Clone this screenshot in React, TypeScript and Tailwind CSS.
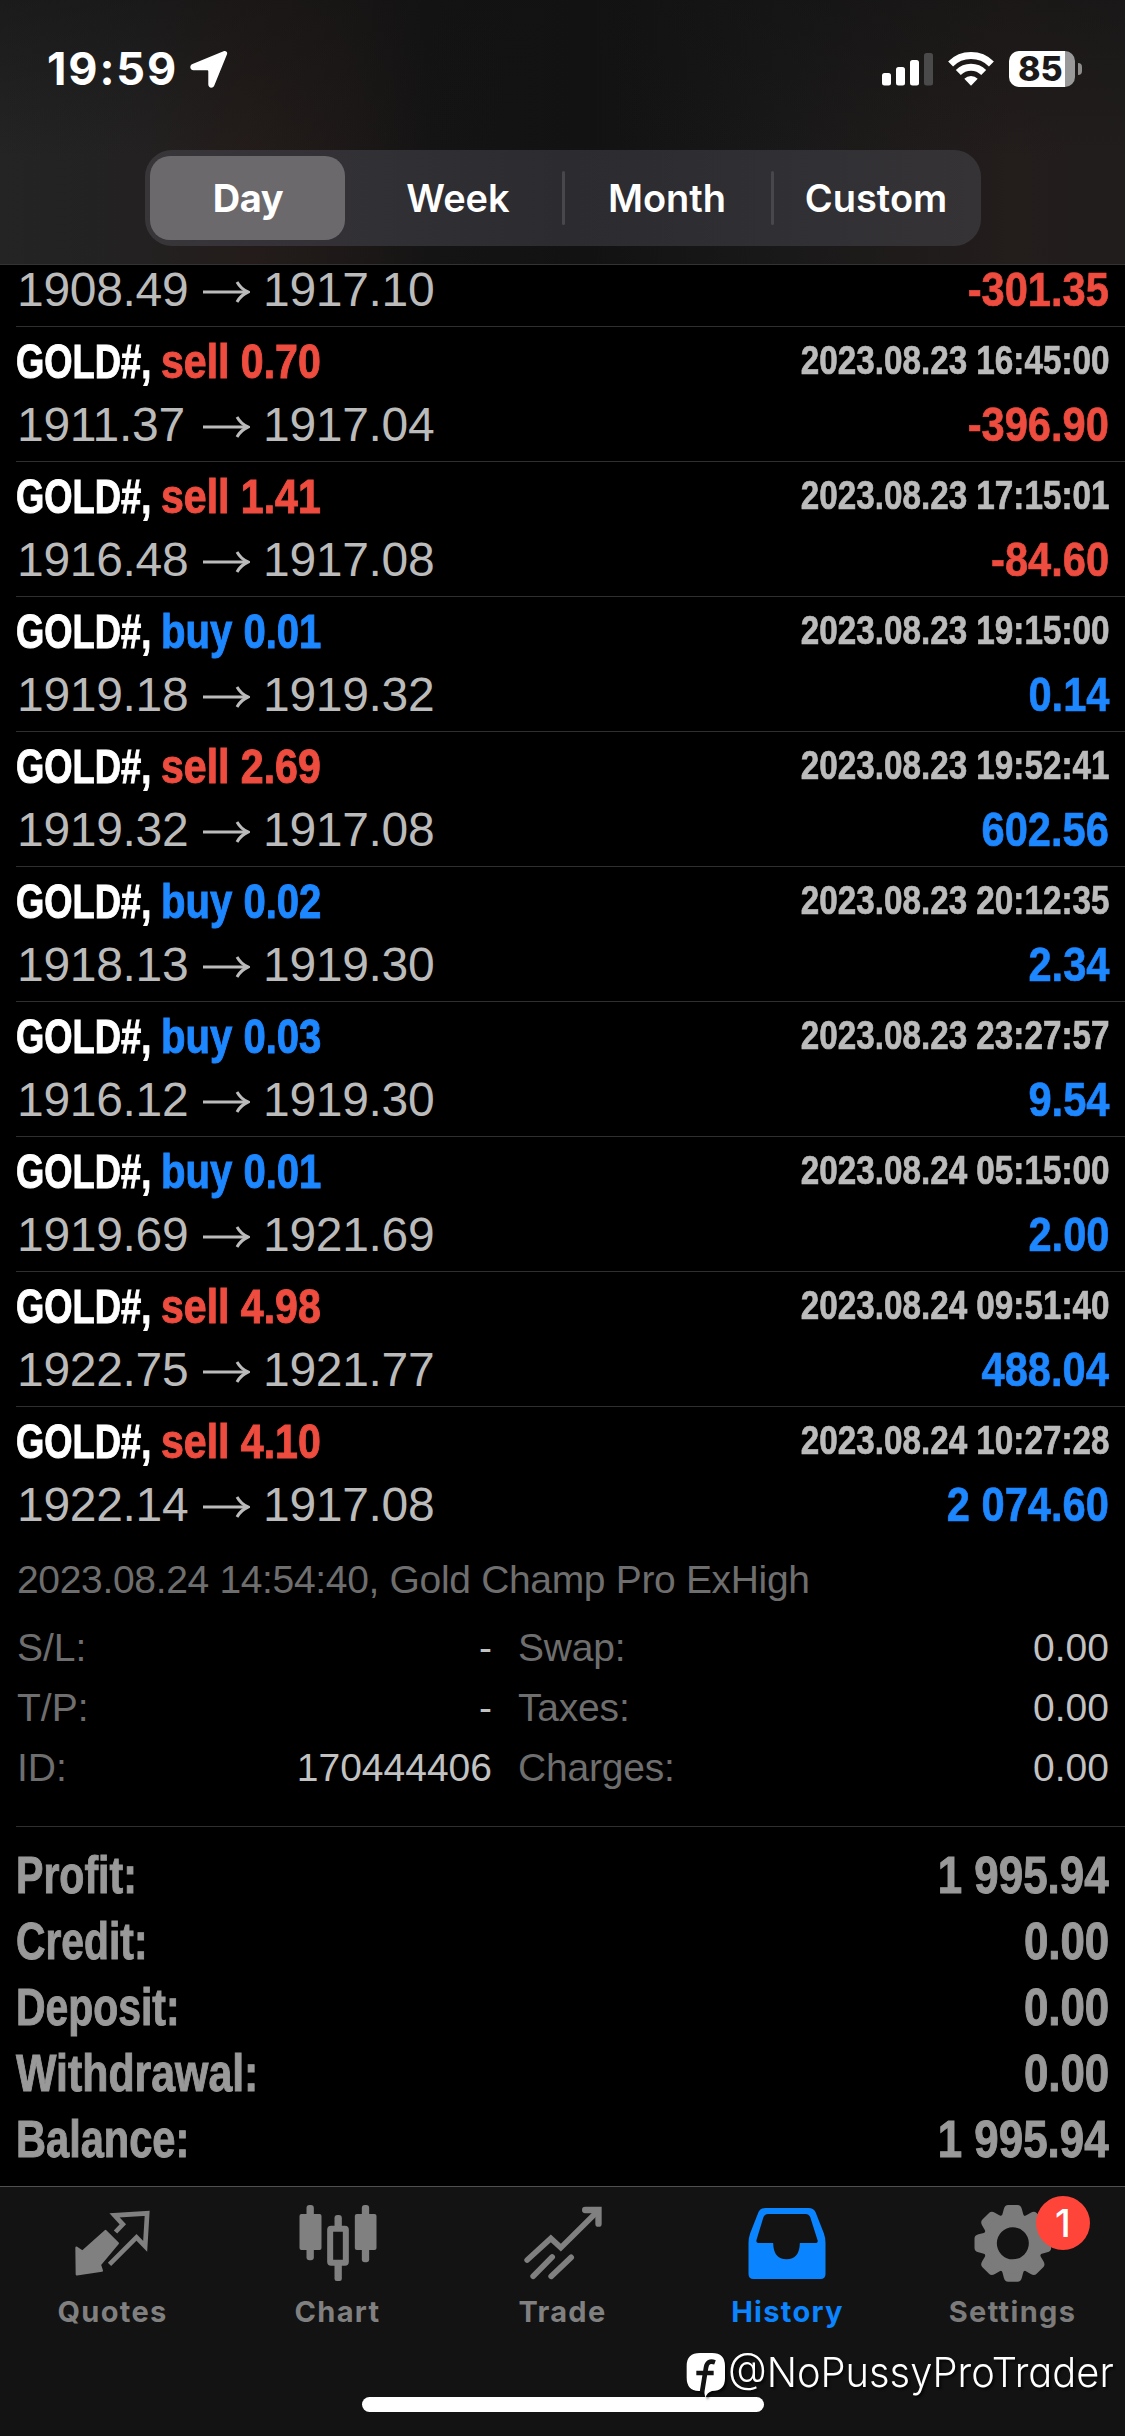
import type { ReactNode } from 'react';

type Deal = {
  side: 'sell' | 'buy';
  volume: string;
  open: string;
  close: string;
  time: string;
  profit: string;
};

const deals: Deal[] = [
  { side: 'sell', volume: '0.70', open: '1911.37', close: '1917.04', time: '2023.08.23 16:45:00', profit: '-396.90' },
  { side: 'sell', volume: '1.41', open: '1916.48', close: '1917.08', time: '2023.08.23 17:15:01', profit: '-84.60' },
  { side: 'buy', volume: '0.01', open: '1919.18', close: '1919.32', time: '2023.08.23 19:15:00', profit: '0.14' },
  { side: 'sell', volume: '2.69', open: '1919.32', close: '1917.08', time: '2023.08.23 19:52:41', profit: '602.56' },
  { side: 'buy', volume: '0.02', open: '1918.13', close: '1919.30', time: '2023.08.23 20:12:35', profit: '2.34' },
  { side: 'buy', volume: '0.03', open: '1916.12', close: '1919.30', time: '2023.08.23 23:27:57', profit: '9.54' },
  { side: 'buy', volume: '0.01', open: '1919.69', close: '1921.69', time: '2023.08.24 05:15:00', profit: '2.00' },
  { side: 'sell', volume: '4.98', open: '1922.75', close: '1921.77', time: '2023.08.24 09:51:40', profit: '488.04' },
  { side: 'sell', volume: '4.10', open: '1922.14', close: '1917.08', time: '2023.08.24 10:27:28', profit: '2 074.60' },
];

const details = [
  ['S/L:', '-', 'Swap:', '0.00'],
  ['T/P:', '-', 'Taxes:', '0.00'],
  ['ID:', '170444406', 'Charges:', '0.00'],
];

const totals = [
  { label: 'Profit:', value: '1 995.94', fit: 'scale-x-[0.805]' },
  { label: 'Credit:', value: '0.00', fit: 'scale-x-[0.8]' },
  { label: 'Deposit:', value: '0.00', fit: 'scale-x-[0.802]' },
  { label: 'Withdrawal:', value: '0.00', fit: 'scale-x-[0.84]' },
  { label: 'Balance:', value: '1 995.94', fit: 'scale-x-[0.815]' },
];

const periods = ['Day', 'Week', 'Month', 'Custom'];

function StatusBar() {
  return (
    <div className="flex h-[150px] items-start justify-between pt-[50px] pr-[43px] pl-[47px]">
      <div className="flex items-start">
        <span className="w-[143px] text-[45px] leading-[38px] font-bold tracking-[1.9px] text-white">19:59</span>
        <svg className="h-[38px] w-[38px]" viewBox="0 0 38 38" fill="#fff">
          <path d="M33.5 1.2c2.5-1.1 4.4.8 3.4 3.3L24.3 35.600c-1.400 3.300-6 2.700-6-1V21.500c0-.9-.4-1.300-1.300-1.300H3.500c-3.700 0-4.400-4.600-1-6.100z" />
        </svg>
      </div>
      <div className="flex items-start">
        <svg className="h-[38px] w-[52px]" viewBox="0 0 52 38" fill="#fff">
          <rect x="0" y="23" width="9" height="12.500" rx="2.500" />
          <rect x="14" y="17" width="9" height="18.500" rx="2.500" />
          <rect x="28" y="10" width="9" height="25.500" rx="2.500" />
          <rect x="42" y="3" width="9" height="32.500" rx="2.500" fill="#4b4a4b" />
        </svg>
        <svg className="ml-[14px] h-[38px] w-[46px]" viewBox="0 0 46 38" fill="none" stroke="#fff" strokeWidth="7">
          <path d="M2.600 13.900a29 29 0 0 1 40.800 0" />
          <path d="M10.300 22.500a18 18 0 0 1 25.400 0" />
          <path d="M23 35.700l-6.700-6.900a9.500 9.500 0 0 1 13.400 0z" fill="#fff" stroke="none" />
        </svg>
        <div className="mt-px ml-[15px] flex items-center">
          <div className="flex h-[36px] w-[66px] items-center rounded-[10px] bg-[linear-gradient(90deg,#fff_56px,#9a9999_56px)] pl-[9px] text-[34px] leading-[36px] font-extrabold text-[#1b1919]">
            85
          </div>
          <div className="ml-[3px] h-[12px] w-[4px] rounded-r-full bg-[#8d8b8b]" />
        </div>
      </div>
    </div>
  );
}

function PeriodTabs() {
  return (
    <div className="mx-auto flex h-[96px] w-[836px] rounded-[27px] bg-[linear-gradient(90deg,#39363a,#2b2b30_50%,#353336)]">
      {periods.map((period, i) => (
        <button key={period} className="relative flex flex-1 items-center justify-center">
          {i === 0 && <span className="absolute top-[6px] left-[5px] h-[84px] w-[195px] rounded-[20px] bg-[#6c696d]" />}
          {i > 1 && <span className="absolute top-[21px] -left-px h-[54px] w-[3px] rounded-full bg-[#48484c]" />}
          <span className={`relative text-[38px] text-white ${i === 0 ? 'right-px font-bold tracking-[-0.4px]' : 'font-semibold'}`}>
            {period}
          </span>
        </button>
      ))}
    </div>
  );
}

function Prices({ open, close }: { open: string; close: string }) {
  return (
    <div className="flex items-center self-start pl-px text-[48px] tracking-[-0.3px] text-[#bbb]">
      <span className="w-[186px] whitespace-nowrap">{open}</span>
      <svg className="mt-[3px] mr-[13px] h-[24px] w-[47px]" viewBox="0 0 47 24" fill="none" stroke="currentColor" strokeWidth="3">
        <path d="M0 12H44" />
        <path d="M34 2Q38 9 45 12Q38 15 34 22" />
      </svg>
      <span>{close}</span>
    </div>
  );
}

function Profit({ value }: { value: string }) {
  const color = value.startsWith('-') ? 'text-[#ee4c3f]' : 'text-[#1d87ff]';
  return <span className={`origin-right scale-x-[0.867] text-[48px] font-bold [-webkit-text-stroke:0.7px] ${color}`}>{value}</span>;
}

function DealRow({ deal }: { deal: Deal }) {
  const sideClass = deal.side === 'sell' ? 'scale-x-[0.855] text-[#ee4c3f]' : 'scale-x-[0.835] text-[#1d87ff]';

  return (
    <div className="h-[134px] pt-[3px]">
      <div className="flex justify-between">
        <div className="flex text-[48px] leading-[63px] font-bold [-webkit-text-stroke:1px]">
          <span className="w-[145px] origin-left scale-x-[0.758] whitespace-nowrap text-white">GOLD#,</span>
          <span className={`origin-left ${sideClass}`}>
            {deal.side} {deal.volume}
          </span>
        </div>
        <span className="origin-right scale-x-[0.831] text-[40px] leading-[61px] font-bold text-[#bbb] [-webkit-text-stroke:0.7px]">
          {deal.time}
        </span>
      </div>
      <div className="mt-px flex justify-between leading-[62px]">
        <Prices open={deal.open} close={deal.close} />
        <Profit value={deal.profit} />
      </div>
    </div>
  );
}

function DealDetails() {
  return (
    <div className="h-[285px] pt-[9px] pl-px text-[39px] leading-[60px] text-[#6e6e6e]">
      <div className="tracking-[-0.33px]">2023.08.24 14:54:40, Gold Champ Pro ExHigh</div>
      <div className="mt-2">
        {details.map(([left, leftValue, right, rightValue]) => (
          <div key={left} className="flex">
            <div className="flex w-[475px] justify-between">
              <span>{left}</span>
              <span className="text-[#c2c2c2]">{leftValue}</span>
            </div>
            <div className="flex flex-1 justify-between pl-[26px]">
              <span className="tracking-[-0.2px]">{right}</span>
              <span className="text-[#c2c2c2]">{rightValue}</span>
            </div>
          </div>
        ))}
      </div>
    </div>
  );
}

function NavItem({ label, viewBox, className, children }: { label: string; viewBox: string; className: string; children: ReactNode }) {
  return (
    <button className={`relative flex flex-1 flex-col items-center pt-2 ${className}`}>
      <svg className="h-[90px] w-[90px]" viewBox={viewBox} fill="currentColor">
        {children}
      </svg>
      <span className="mt-[7px] text-[29px] leading-[40px] font-bold tracking-[1.3px]">{label}</span>
      {label === 'Settings' && (
        <span className="absolute top-[9px] left-[136px] flex h-[54px] w-[54px] items-center justify-center rounded-full bg-[#ff453a] text-[38px] font-medium text-white">
          1
        </span>
      )}
    </button>
  );
}

function BottomNav() {
  return (
    <nav className="flex h-[249px] items-start bg-[#131313] font-[Inter]">
      <NavItem label="Quotes" viewBox="202.5 45 270 270" className="text-[#808080]">
        <path d="M315 153l37 37-54 64 6 18-75 11-1-80 18 12z" stroke="currentColor" strokeWidth="7" strokeLinejoin="round" />
        <path d="M345 156l22-23-25-27 98-6-6 99-26-27-81 81" fill="none" stroke="currentColor" strokeWidth="14" />
      </NavItem>
      <NavItem label="Chart" viewBox="877.5 45 270 270" className="text-[#808080]">
        <rect x="918" y="75" width="22" height="166" rx="9" />
        <rect x="897" y="102" width="66" height="108" rx="6" />
        <rect x="1084" y="75" width="22" height="172" rx="9" />
        <rect x="1063" y="102" width="65" height="108" rx="6" />
        <rect x="1002" y="105" width="22" height="40" rx="9" />
        <rect x="1002" y="245" width="22" height="58" rx="7" />
        <rect x="989" y="146" width="47" height="102" rx="3" fill="none" stroke="currentColor" strokeWidth="18" />
      </NavItem>
      <NavItem label="Trade" viewBox="352.5 45 270 270" className="text-[#808080]">
        <g fill="none" stroke="currentColor" strokeWidth="17" strokeLinecap="round">
          <path d="M380 240l71-65 30 28 111-110" />
          <path d="M554 90h40v41" strokeWidth="19" />
          <path d="M398 289l57-58M452 289l60-57" />
        </g>
      </NavItem>
      <NavItem label="History" viewBox="52.5 45 270 270" className="text-[#0a84ff]">
        <path
          fillRule="evenodd"
          d="M120 84H249Q264 84 270 96L295 160Q300 174 300 188V282Q300 297 285 297H84Q69 297 69 282V188Q69 174 74 160L99 96Q105 84 120 84ZM128 102Q118 102 114 111L93 180Q91 189 101 189H143Q144 238 183 238Q222 238 223 189H268Q279 189 276 180L254 111Q250 102 240 102Z"
        />
      </NavItem>
      <NavItem label="Settings" viewBox="727.5 45 270 270" className="text-[#7b7b7b]">
        <g>
          {[0, 45, 90, 135, 180, 225, 270, 315].map((angle) => (
            <path key={angle} transform={`rotate(${angle} 862 190)`} d="M824 120Q832 102 835 87Q838 75 848 75H876Q886 75 889 87Q892 102 900 120Z" />
          ))}
          <circle cx="862" cy="190" r="69" fill="none" stroke="currentColor" strokeWidth="42" />
        </g>
      </NavItem>
    </nav>
  );
}

function Watermark() {
  return (
    <div className="absolute top-[2342px] left-[686px] flex h-[60px] items-center text-white drop-shadow-[2px_2px_1px_rgba(0,0,0,0.7)]">
      <svg className="mt-[6px] mr-[3px] h-[48px] w-[39px]" viewBox="858 516 117 144">
        <path d="M900 522H936Q975 522 975 561V598Q975 636 936 636Q922 640 916 656L912 636H896Q860 634 860 596V560Q860 522 900 522Z" fill="#fff" />
        <path d="M945 550Q922 542 918 566L906 640M889 582H941" fill="none" stroke="#131313" strokeWidth="14" />
      </svg>
      <span className="w-[385px] origin-left scale-x-[0.96] font-[Inter] text-[41.5px] font-light whitespace-nowrap [font-feature-settings:'cv11']">
        @NoPussyProTrader
      </span>
    </div>
  );
}

export default function App() {
  return (
    <div className="relative h-[2436px] w-[1125px] overflow-hidden bg-black font-['Liberation_Sans',Arial,sans-serif]">
      <header className="h-[265px] border-b border-[#333] bg-[linear-gradient(180deg,rgba(18,18,18,0.5),rgba(18,18,18,0)_60%),linear-gradient(90deg,#242425_0%,#232121_13%,#231c1a_22%,#1e1918_30%,#151414_38%,#121212_52%,#1a1919_70%,#231d1c_90%,#211d1d_100%)] font-[Inter]">
        <StatusBar />
        <PeriodTabs />
      </header>

      <main className="h-[1921px] pl-[16px]">
        <div className="flex h-[62px] justify-between border-b border-[#2f2f2f] pr-[16px] leading-[50px]">
          <Prices open="1908.49" close="1917.10" />
          <Profit value="-301.35" />
        </div>
        {deals.map((deal, i) => (
          <div key={deal.time} className="border-b border-[#2f2f2f] pr-[16px]">
            <DealRow deal={deal} />
            {i === deals.length - 1 && <DealDetails />}
          </div>
        ))}
        <div className="pt-[16px] pr-[16px] text-[51px] leading-[66px] font-bold text-[#999] [-webkit-text-stroke:1px]">
          {totals.map(({ label, value, fit }) => (
            <div key={label} className="flex justify-between">
              <span className={`origin-left ${fit}`}>{label}</span>
              <span className="origin-right scale-x-[0.86]">{value}</span>
            </div>
          ))}
        </div>
      </main>

      <div className="h-px bg-[#505050]" />
      <BottomNav />
      <div className="absolute bottom-[24px] left-[362px] h-[15px] w-[402px] rounded-full bg-white" />
      <Watermark />
    </div>
  );
}
